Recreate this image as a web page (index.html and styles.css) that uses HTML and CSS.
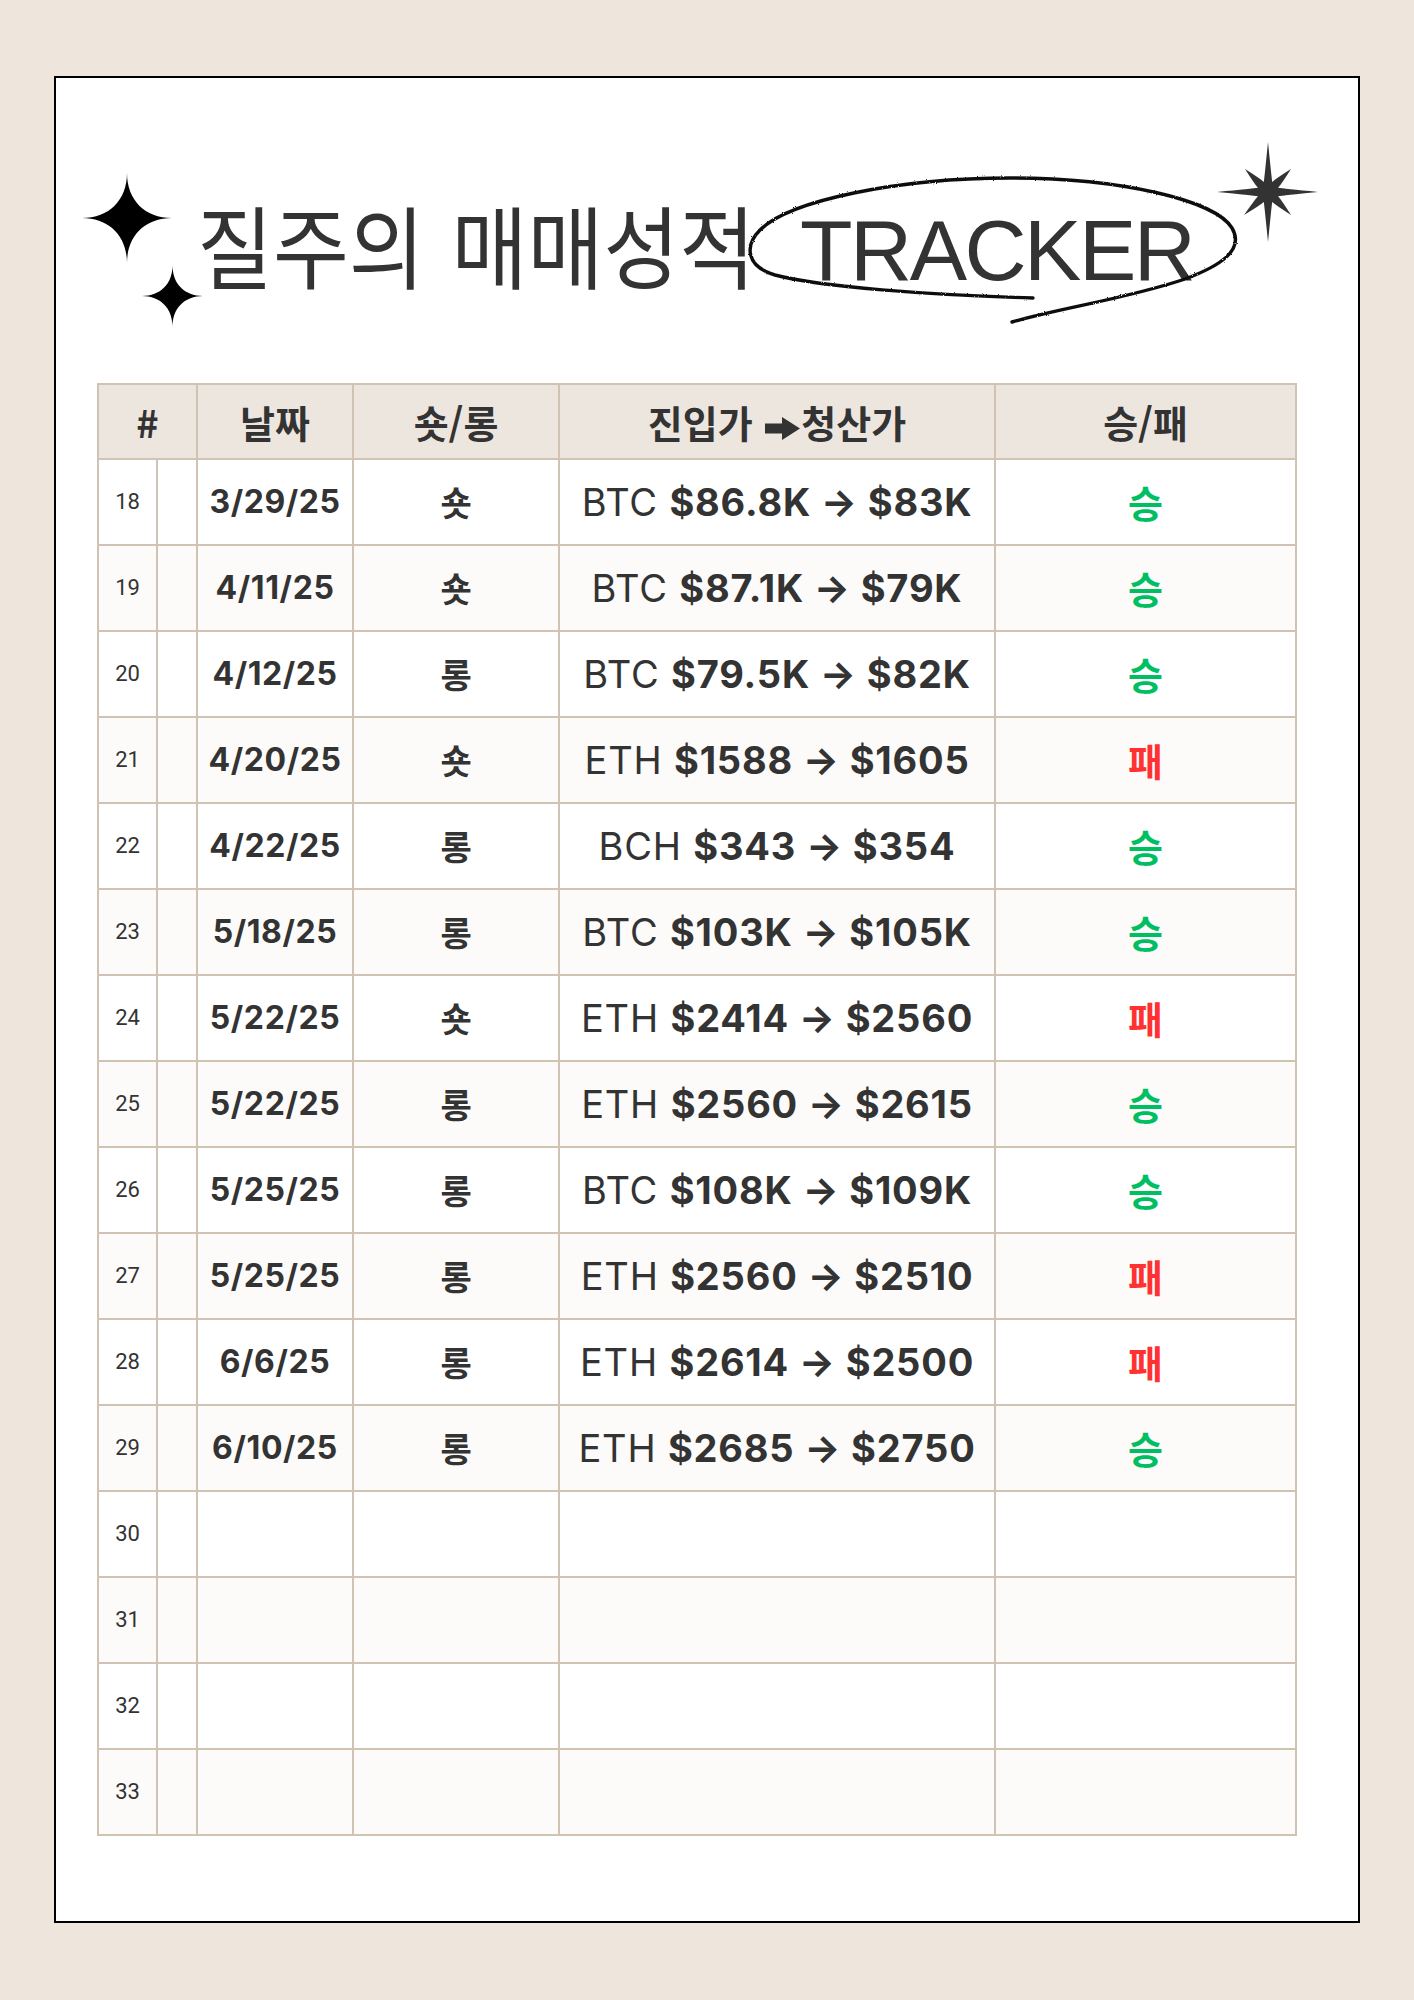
FILE: index.html
```html
<!DOCTYPE html>
<html lang="ko">
<head>
<meta charset="utf-8">
<title>질주의 매매성적 TRACKER</title>
<link rel="stylesheet" href="styles.css">
</head>
<body>
<div class="page">
  <header class="hero">
    <svg class="sparkles" width="116" height="156" viewBox="81 172 116 156" aria-hidden="true">
      <path d="M127 173 C127 200 145 218 172 218 C145 218 127 236 127 263 C127 236 109 218 82 218 C109 218 127 200 127 173Z"/>
      <path d="M172.5 265.5 C172.5 283.8 184.7 296 203 296 C184.7 296 172.5 308.2 172.5 326.5 C172.5 308.2 160.3 296 142 296 C160.3 296 172.5 283.8 172.5 265.5Z"/>
    </svg>
    <div class="title-box"><h1 class="title-kr">질주의 매매성적</h1></div>
    <div class="tracker">
      <span class="tracker-text">TRACKER</span>
      <svg class="oval" width="500" height="160" viewBox="745 170 500 160" aria-hidden="true">
        <defs>
          <filter id="rough" x="-5%" y="-10%" width="110%" height="120%">
            <feTurbulence type="fractalNoise" baseFrequency="0.9" numOctaves="2" seed="3"/>
            <feDisplacementMap in="SourceGraphic" scale="2.2"/>
          </filter>
        </defs>
        <path filter="url(#rough)" d="M1033 298 C930 295 820 287 775 275 C745 266 745 245 760 230 C790 200 900 178 1010 178 C1120 178 1215 200 1232 228 C1245 250 1220 266 1185 279 C1130 298 1060 308 1012 322"/>
      </svg>
    </div>
    <svg class="star8" width="110" height="110" viewBox="1213 138 110 110" aria-hidden="true">
      <g transform="translate(1268 192)">
        <path d="M0,-50 Q3.5,-15 4.2,-10.1 Q8,-13.5 23,-23 Q13.5,-8 10.1,-4.2 Q15,-3.5 50,0 Q15,3.5 10.1,4.2 Q13.5,8 23,23 Q8,13.5 4.2,10.1 Q3.5,15 0,50 Q-3.5,15 -4.2,10.1 Q-8,13.5 -24,23 Q-13.5,8 -10.1,4.2 Q-15,3.5 -51,0 Q-15,-3.5 -10.1,-4.2 Q-13.5,-8 -23,-23 Q-8,-13.5 -4.2,-10.1 Q-3.5,-15 0,-50Z"/>
      </g>
    </svg>
  </header>

  <table class="log">
    <colgroup>
      <col class="c-num"><col class="c-sub"><col class="c-date"><col class="c-side"><col class="c-price"><col class="c-res">
    </colgroup>
    <thead>
      <tr>
        <th colspan="2">#</th>
        <th>날짜</th>
        <th>숏/롱</th>
        <th>진입가 <svg class="hd-arrow" width="35" height="23" viewBox="0 0 35 23" aria-hidden="true"><path d="M0 6.5 H17 V0 L35 11.5 L17 23 V16.5 H0 Z"/></svg>청산가</th>
        <th>승/패</th>
      </tr>
    </thead>
    <tbody>
      <tr><td class="num">18</td><td></td><td class="date">3/29/25</td><td class="side">숏</td><td class="price">BTC <b>$86.8K → $83K</b></td><td class="res win">승</td></tr>
      <tr><td class="num">19</td><td></td><td class="date">4/11/25</td><td class="side">숏</td><td class="price">BTC <b>$87.1K → $79K</b></td><td class="res win">승</td></tr>
      <tr><td class="num">20</td><td></td><td class="date">4/12/25</td><td class="side">롱</td><td class="price">BTC <b>$79.5K → $82K</b></td><td class="res win">승</td></tr>
      <tr><td class="num">21</td><td></td><td class="date">4/20/25</td><td class="side">숏</td><td class="price">ETH <b>$1588 → $1605</b></td><td class="res loss">패</td></tr>
      <tr><td class="num">22</td><td></td><td class="date">4/22/25</td><td class="side">롱</td><td class="price">BCH <b>$343 → $354</b></td><td class="res win">승</td></tr>
      <tr><td class="num">23</td><td></td><td class="date">5/18/25</td><td class="side">롱</td><td class="price">BTC <b>$103K → $105K</b></td><td class="res win">승</td></tr>
      <tr><td class="num">24</td><td></td><td class="date">5/22/25</td><td class="side">숏</td><td class="price">ETH <b>$2414 → $2560</b></td><td class="res loss">패</td></tr>
      <tr><td class="num">25</td><td></td><td class="date">5/22/25</td><td class="side">롱</td><td class="price">ETH <b>$2560 → $2615</b></td><td class="res win">승</td></tr>
      <tr><td class="num">26</td><td></td><td class="date">5/25/25</td><td class="side">롱</td><td class="price">BTC <b>$108K → $109K</b></td><td class="res win">승</td></tr>
      <tr><td class="num">27</td><td></td><td class="date">5/25/25</td><td class="side">롱</td><td class="price">ETH <b>$2560 → $2510</b></td><td class="res loss">패</td></tr>
      <tr><td class="num">28</td><td></td><td class="date">6/6/25</td><td class="side">롱</td><td class="price">ETH <b>$2614 → $2500</b></td><td class="res loss">패</td></tr>
      <tr><td class="num">29</td><td></td><td class="date">6/10/25</td><td class="side">롱</td><td class="price">ETH <b>$2685 → $2750</b></td><td class="res win">승</td></tr>
      <tr><td class="num">30</td><td></td><td></td><td></td><td></td><td></td></tr>
      <tr><td class="num">31</td><td></td><td></td><td></td><td></td><td></td></tr>
      <tr><td class="num">32</td><td></td><td></td><td></td><td></td><td></td></tr>
      <tr><td class="num">33</td><td></td><td></td><td></td><td></td><td></td></tr>
    </tbody>
  </table>
</div>
</body>
</html>
```

FILE: styles.css
```css
* { box-sizing: border-box; }

html, body {
  margin: 0;
  padding: 0;
}

body {
  background: #eee6dc;
  width: 1414px;
  height: 2000px;
  padding: 76px 54px 0 54px;
  font-family: "Inter", "Noto Sans CJK KR", sans-serif;
  color: #333333;
}

.page {
  width: 1306px;
  height: 1847px;
  background: #ffffff;
  border: 2px solid #000000;
}

/* ---------- title area ---------- */
.hero {
  display: flex;
  align-items: flex-start;
  height: 305px;
}

.sparkles {
  flex: none;
  margin-left: 25px;
  margin-top: 94px;
  overflow: visible;
  fill: #000000;
}

.title-box {
  flex: none;
  width: 603px;
  margin-top: 120px;
}

.title-kr {
  display: inline-block;
  margin: 0;
  font-family: "Noto Sans CJK KR", sans-serif;
  font-weight: 400;
  font-size: 90px;
  line-height: 1;
  word-spacing: 4px;
  color: #333333;
  white-space: nowrap;
  transform: scaleX(0.917);
  transform-origin: 0 50%;
}

.tracker {
  flex: none;
  position: relative;
  margin-top: 129px;
}

.tracker-text {
  display: block;
  font-family: "Liberation Sans", Arial, sans-serif;
  font-size: 86px;
  line-height: 1;
  letter-spacing: -2.5px;
  color: #333333;
}

.oval {
  position: absolute;
  left: -55px;
  top: -37px;
  overflow: visible;
  fill: none;
  stroke: #111111;
  stroke-width: 3.4;
  stroke-linecap: round;
  stroke-linejoin: round;
}

.star8 {
  flex: none;
  margin-left: 20px;
  margin-top: 60px;
  overflow: visible;
  fill: #333333;
}

/* ---------- table ---------- */
.log {
  margin-left: 41px;
  width: 1198px;
  border-collapse: collapse;
  table-layout: fixed;
}

.c-num { width: 59px; }
.c-sub { width: 40px; }
.c-date { width: 156px; }
.c-side { width: 206px; }
.c-price { width: 436px; }
.c-res { width: 301px; }

.log th,
.log td {
  border: 2px solid #d0c3b3;
  padding: 0;
  text-align: center;
  vertical-align: middle;
  line-height: 1;
  color: #333333;
}

.log thead tr { height: 75px; }
.log tbody tr { height: 86px; }

.log th {
  background: #ede6df;
  font-family: "Noto Sans CJK KR", sans-serif;
  font-weight: 700;
  font-size: 38px;
}

.log .hd-arrow {
  display: inline-block;
  vertical-align: -2px;
  margin-left: 2px;
  margin-right: 1px;
  fill: #333333;
}

.log tbody tr:nth-child(even) td { background: #fcfbf9; }

.log .num {
  font-family: "Roboto", sans-serif;
  font-weight: 400;
  font-size: 22px;
}

.log .date {
  font-family: "Inter", sans-serif;
  font-weight: 700;
  font-size: 32px;
  letter-spacing: 0.6px;
}

.log .side {
  font-family: "Noto Sans CJK KR", sans-serif;
  font-weight: 700;
  font-size: 34px;
}

.log .price {
  font-family: "Inter", sans-serif;
  font-weight: 400;
  font-size: 38px;
  letter-spacing: 0.8px;
  white-space: nowrap;
}

.log .price b { font-weight: 700; }

.log .res {
  font-family: "Noto Sans CJK KR", sans-serif;
  font-weight: 700;
  font-size: 38px;
}

.log .win { color: #00bf63; }
.log .loss { color: #ff3131; }
```
